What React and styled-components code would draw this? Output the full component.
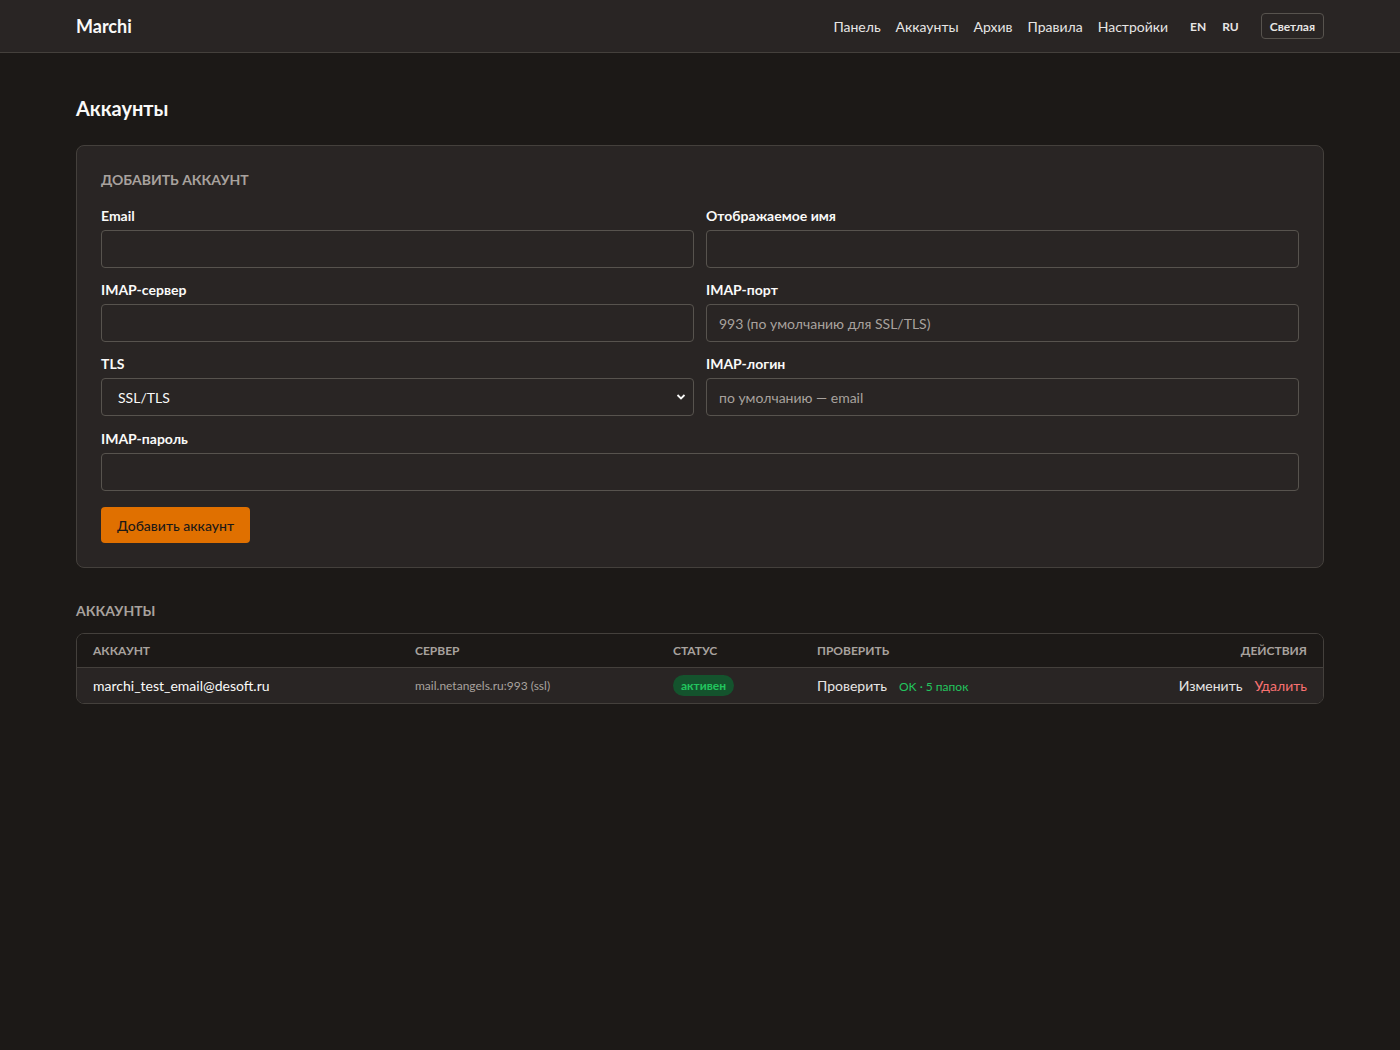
import React from "react";
import styled, { createGlobalStyle } from "styled-components";

const GlobalStyle = createGlobalStyle`
  * { box-sizing: border-box; }
  body {
    margin: 0;
    background: #1c1917;
    color: #fafaf9;
    font-family: Lato, "Noto Sans", sans-serif;
    font-size: 14px;
  }
`;

const Header = styled.header`
  height: 53px;
  background: #292524;
  border-bottom: 1px solid #44403c;
`;
const HeaderInner = styled.div`
  max-width: 1248px;
  margin: 0 auto;
  height: 100%;
  display: flex;
  align-items: center;
  justify-content: space-between;
`;
const Brand = styled.div`
  font-size: 18px;
  font-weight: 700;
  color: #fafaf9;
`;
const Nav = styled.nav`
  display: flex;
  align-items: center;
`;
const NavLink = styled.a`
  color: #e7e5e4;
  font-size: 14px;
  margin-left: 15px;
  text-decoration: none;
`;
const Lang = styled.span`
  font-size: 12px;
  font-weight: 700;
  color: #e7e5e4;
  margin-left: ${(p) => (p.first ? "22px" : "16px")};
`;
const ThemeButton = styled.button`
  margin-left: 22px;
  background: transparent;
  border: 1px solid #57534e;
  border-radius: 4px;
  color: #e7e5e4;
  font-family: inherit;
  font-size: 12px;
  font-weight: 700;
  height: 26px;
  padding: 0 8px;
`;

const Main = styled.main`
  max-width: 1248px;
  margin: 0 auto;
  padding-top: 41px;
`;
const PageTitle = styled.h1`
  margin: 0 0 23px;
  font-size: 20px;
  font-weight: 700;
  line-height: 28px;
`;
const Card = styled.section`
  background: #292524;
  border: 1px solid #44403c;
  border-radius: 8px;
  padding: 24px;
`;
const SectionTitle = styled.h2`
  margin: 0 0 ${(p) => (p.spaced ? "12px" : "18px")};
  font-size: 14px;
  font-weight: 700;
  color: #a8a29e;
  text-transform: uppercase;
  line-height: 20px;
`;
const Grid = styled.div`
  display: grid;
  grid-template-columns: 1fr 1fr;
  column-gap: 12px;
  row-gap: 14px;
`;
const Field = styled.label`
  display: flex;
  flex-direction: column;
  gap: 6px;
  grid-column: ${(p) => (p.wide ? "1 / -1" : "auto")};
  margin-top: ${(p) => (p.wide ? "1px" : "0")};
`;
const Label = styled.span`
  font-size: 14px;
  font-weight: 700;
  line-height: 16px;
  color: #fafaf9;
`;
const Input = styled.input`
  height: 38px;
  background: #292524;
  border: 1px solid #57534e;
  border-radius: 4px;
  padding: 0 12px;
  color: #fafaf9;
  font-family: inherit;
  font-size: 14px;
  &::placeholder { color: #a8a29e; }
`;
const SelectWrap = styled.div`
  position: relative;
`;
const Select = styled.select`
  width: 100%;
  height: 38px;
  appearance: none;
  background: #292524;
  border: 1px solid #57534e;
  border-radius: 4px;
  padding: 0 16px;
  color: #fafaf9;
  font-family: inherit;
  font-size: 14px;
`;
const Chevron = styled.svg`
  position: absolute;
  right: 8px;
  top: 14px;
  pointer-events: none;
`;
const PrimaryButton = styled.button`
  margin-top: 16px;
  height: 36px;
  padding: 0 16px;
  background: #e07000;
  border: none;
  border-radius: 4px;
  color: #1c1917;
  font-family: inherit;
  font-size: 14px;
  font-weight: 500;
`;

const ListSection = styled.section`
  margin-top: 33px;
`;
const TableBox = styled.div`
  border: 1px solid #44403c;
  border-radius: 8px;
  overflow: hidden;
`;
const Table = styled.table`
  width: 100%;
  border-collapse: collapse;
  table-layout: fixed;
`;
const Th = styled.th`
  height: 33px;
  padding: 0 16px;
  text-align: ${(p) => (p.right ? "right" : "left")};
  font-size: 12px;
  font-weight: 700;
  color: #a8a29e;
  text-transform: uppercase;
  background: #1c1917;
  border-bottom: 1px solid #44403c;
  width: ${(p) => p.w || "auto"};
`;
const Td = styled.td`
  height: 36px;
  padding: 0 16px;
  background: #292524;
  text-align: ${(p) => (p.right ? "right" : "left")};
  font-size: ${(p) => (p.small ? "12px" : "14px")};
  color: ${(p) => (p.muted ? "#a8a29e" : "#fafaf9")};
`;
const Badge = styled.span`
  display: inline-block;
  padding: 3px 8px;
  border-radius: 999px;
  background: #14532d;
  color: #22c55e;
  font-size: 12px;
  font-weight: 700;
`;
const LinkButton = styled.a`
  color: ${(p) => (p.danger ? "#f87171" : "#e7e5e4")};
  font-size: 14px;
  margin-left: ${(p) => (p.gap ? "12px" : "0")};
  text-decoration: none;
`;
const CheckResult = styled.span`
  margin-left: 12px;
  color: #22c55e;
  font-size: 12px;
`;

export default function App() {
  const nav = ["Панель", "Аккаунты", "Архив", "Правила", "Настройки"];
  return (
    <>
      <GlobalStyle />
      <Header>
        <HeaderInner>
          <Brand>Marchi</Brand>
          <Nav>
            {nav.map((n) => (
              <NavLink key={n}>{n}</NavLink>
            ))}
            <Lang first>EN</Lang>
            <Lang>RU</Lang>
            <ThemeButton>Светлая</ThemeButton>
          </Nav>
        </HeaderInner>
      </Header>
      <Main>
        <PageTitle>Аккаунты</PageTitle>
        <Card>
          <SectionTitle>Добавить аккаунт</SectionTitle>
          <Grid>
            <Field>
              <Label>Email</Label>
              <Input />
            </Field>
            <Field>
              <Label>Отображаемое имя</Label>
              <Input />
            </Field>
            <Field>
              <Label>IMAP-сервер</Label>
              <Input />
            </Field>
            <Field>
              <Label>IMAP-порт</Label>
              <Input placeholder="993 (по умолчанию для SSL/TLS)" />
            </Field>
            <Field>
              <Label>TLS</Label>
              <SelectWrap>
                <Select defaultValue="ssl">
                  <option value="ssl">SSL/TLS</option>
                  <option value="starttls">STARTTLS</option>
                  <option value="none">Нет</option>
                </Select>
                <Chevron width="10" height="10" viewBox="0 0 10 10">
                  <path d="M1.5 3 L5 6.5 L8.5 3" fill="none" stroke="#fafaf9" strokeWidth="1.8" />
                </Chevron>
              </SelectWrap>
            </Field>
            <Field>
              <Label>IMAP-логин</Label>
              <Input placeholder="по умолчанию — email" />
            </Field>
            <Field wide>
              <Label>IMAP-пароль</Label>
              <Input type="password" />
            </Field>
          </Grid>
          <PrimaryButton>Добавить аккаунт</PrimaryButton>
        </Card>

        <ListSection>
          <SectionTitle spaced>Аккаунты</SectionTitle>
          <TableBox>
            <Table>
              <thead>
                <tr>
                  <Th w="322px">Аккаунт</Th>
                  <Th w="258px">Сервер</Th>
                  <Th w="144px">Статус</Th>
                  <Th w="300px">Проверить</Th>
                  <Th right>Действия</Th>
                </tr>
              </thead>
              <tbody>
                <tr>
                  <Td>marchi_test_email@desoft.ru</Td>
                  <Td small muted>mail.netangels.ru:993 (ssl)</Td>
                  <Td>
                    <Badge>активен</Badge>
                  </Td>
                  <Td>
                    <LinkButton>Проверить</LinkButton>
                    <CheckResult>OK · 5 папок</CheckResult>
                  </Td>
                  <Td right>
                    <LinkButton>Изменить</LinkButton>
                    <LinkButton danger gap>
                      Удалить
                    </LinkButton>
                  </Td>
                </tr>
              </tbody>
            </Table>
          </TableBox>
        </ListSection>
      </Main>
    </>
  );
}
